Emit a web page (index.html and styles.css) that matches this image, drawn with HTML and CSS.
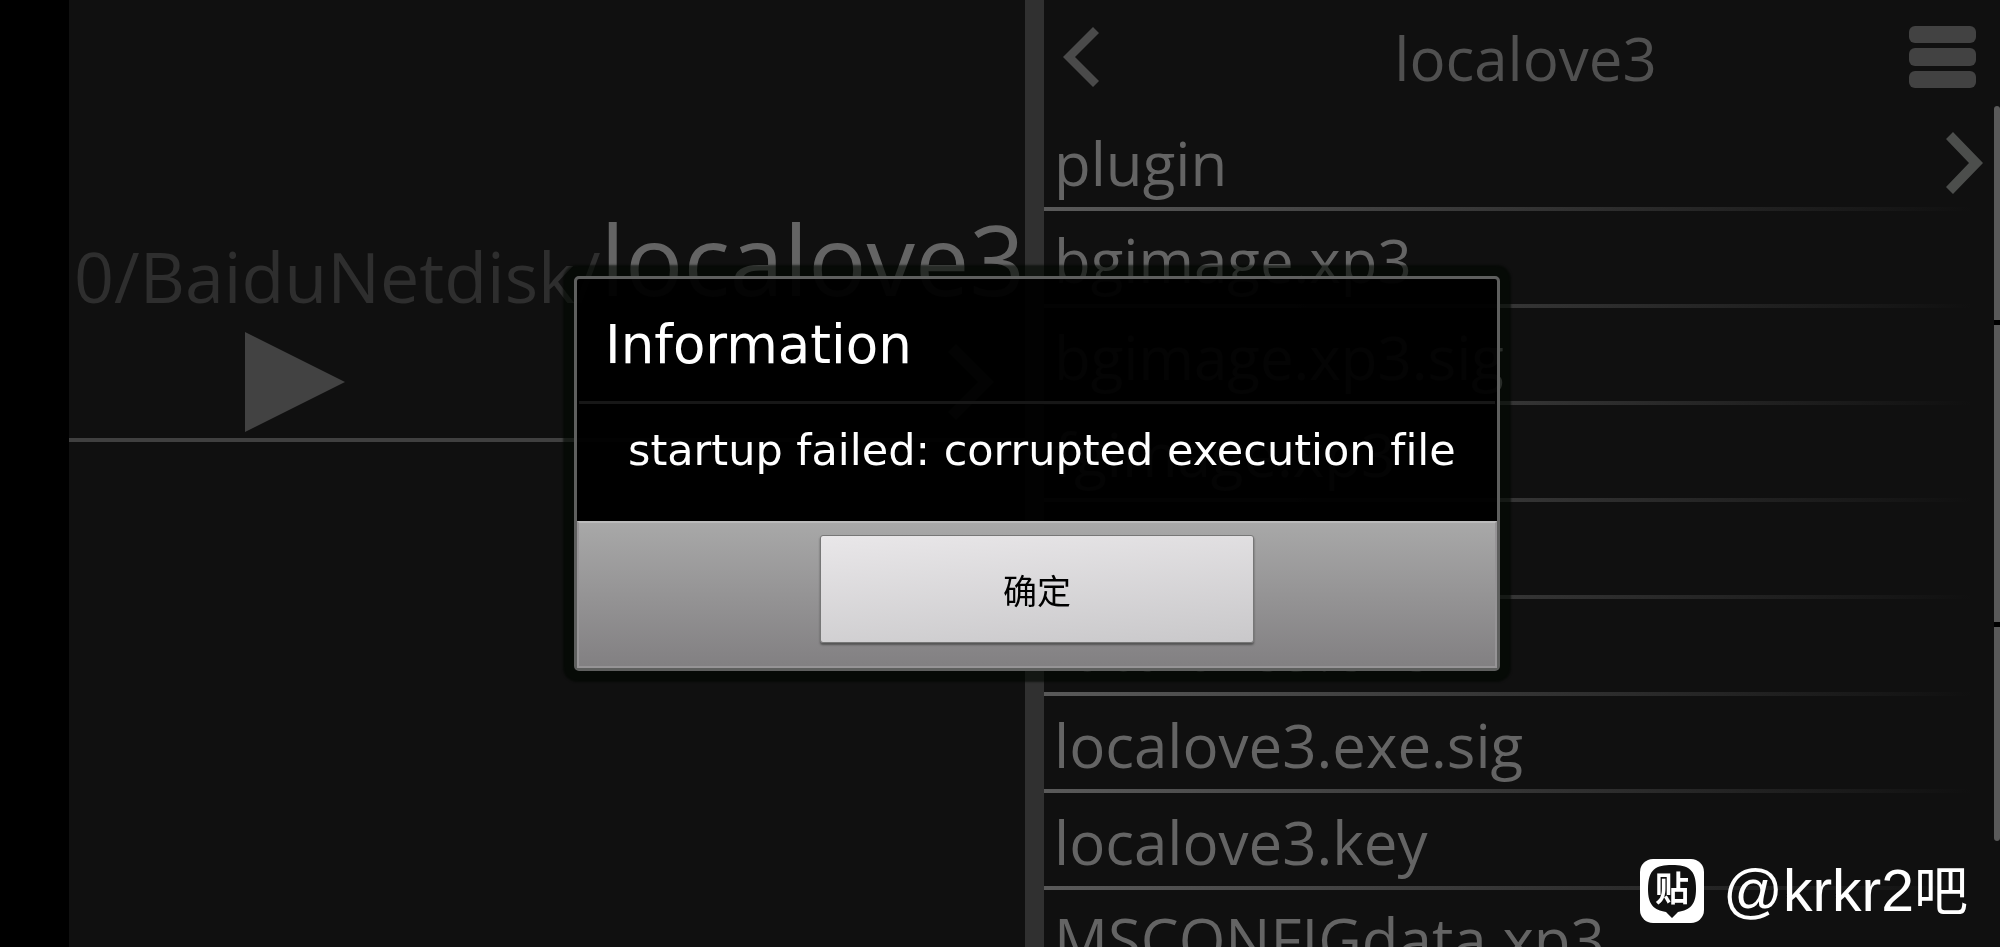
FILE: index.html
```html
<!DOCTYPE html>
<html lang="zh-CN">
<head>
    <meta charset="UTF-8">
    <meta name="viewport" content="width=device-width, initial-scale=1.0">
    <title>localove3</title>
    <link rel="stylesheet" href="styles.css">
</head>
<body>
    <div class="notch"></div>

    <section class="recent">
        <div class="recent-path">
            <span class="folder">0/BaiduNetdisk/</span>
            <span class="game">localove3</span>
        </div>
        <div class="recent-actions">
            <button class="icon-btn" aria-label="Play">
                <svg width="100" height="100" viewBox="0 0 100 100"><path d="M0 0L100 50L0 100Z" fill="#424242"/></svg>
            </button>
            <button class="icon-btn" aria-label="Open">
                <svg width="46" height="76" viewBox="0 0 46 76"><path d="M8 0L46 38L8 76L0 68L30 38L0 8Z" fill="#4c4e4c"/></svg>
            </button>
        </div>
    </section>

    <main class="browser">
        <header class="topbar">
            <button class="icon-btn" aria-label="Back">
                <svg width="36" height="60" viewBox="0 0 36 60"><path d="M30 0L36 6L12 30L36 54L30 60L0 30Z" fill="#4a4a4a"/></svg>
            </button>
            <h1>localove3</h1>
            <button class="icon-btn menu-btn" aria-label="Menu">
                <svg width="67" height="62" viewBox="0 0 67 62" fill="#424242">
                    <rect y="0" width="67" height="17" rx="6"/>
                    <rect y="22" width="67" height="18" rx="6"/>
                    <rect y="45" width="67" height="17" rx="6"/>
                </svg>
            </button>
        </header>
        <ul class="files">
            <li>plugin
                <button class="icon-btn" aria-label="Open plugin">
                    <svg width="37" height="62" viewBox="0 0 37 62"><path d="M7 0L37 31L7 62L0 55L23 31L0 7Z" fill="#4c4e4c"/></svg>
                </button>
            </li>
            <li>bgimage.xp3</li>
            <li>bgimage.xp3.sig</li>
            <li>fgimage.xp3</li>
            <li>fgimage.xp3.sig</li>
            <li>localove3.exe</li>
            <li>localove3.exe.sig</li>
            <li>localove3.key</li>
            <li>MSCONFIGdata.xp3</li>
        </ul>
        <div class="scrollbar"><i></i><i></i><i></i></div>
    </main>

    <div class="overlay">
        <div class="dialog" role="alertdialog" aria-labelledby="dlg-title" aria-describedby="dlg-text">
            <h2 id="dlg-title">Information</h2>
            <p id="dlg-text">startup failed: corrupted execution file</p>
            <div class="dialog-footer">
                <button class="ok-btn">确定</button>
            </div>
        </div>
    </div>

    <div class="watermark">
        <svg width="64" height="64" viewBox="0 0 64 64">
            <rect width="64" height="64" rx="13" fill="#fff"/>
            <path d="M32 6C48 6 56 10 56 30C56 46 50 51 38 53L32 59L26 53C14 51 8 46 8 30C8 10 16 6 32 6Z" fill="#101010"/>
            <text class="logo-text" x="32" y="42" text-anchor="middle">贴</text>
        </svg>
        <span>@krkr2<span class="ba">吧</span></span>
    </div>
</body>
</html>
```

FILE: styles.css
```css
* { box-sizing: border-box; }
body { display: flex; height: 100vh; margin: 0; overflow: hidden; background: #101010; color: #646464; font-family: "Open Sans", "Noto Sans CJK SC", sans-serif; }
h1, h2, p, ul { margin: 0; padding: 0; font-weight: normal; }
svg { display: block; }
.icon-btn { padding: 0; border: 0; background: none; cursor: pointer; }

.notch { flex: 0 0 69px; background: #000; }

/* left side: last played game */
.recent { flex: 1; min-width: 0; padding-top: 192px; overflow: hidden; }
.recent-path { display: flex; justify-content: flex-end; align-items: flex-end; height: 132px; white-space: nowrap; }
.folder { font-size: 70px; color: #2e2e2e; }
.game { font-size: 97px; }
.recent-actions { display: flex; justify-content: space-between; align-items: center; height: 118px; padding: 2px 31px 0 176px; border-bottom: 4px solid #404040; }

/* right side: file list */
.browser { position: relative; flex: 1; min-width: 0; border-left: 19px solid #303030; flex-basis: 19px; }
.topbar { display: grid; grid-template-columns: 85px 1fr 73px; align-items: center; height: 114px; padding: 0 24px 0 19px; }
.topbar h1 { padding-top: 2px; font-size: 60px; line-height: 82px; color: #505050; text-align: center; }
.menu-btn { justify-self: end; }
.files { list-style: none; }
.files li { display: flex; justify-content: space-between; align-items: center; height: 97px; padding: 4px 17px 0 10px; border-bottom: 4px solid; border-image: linear-gradient(to right, #5a5a5a, #101010 97%) 1; border-width: 0 0 4px; font-size: 60px; line-height: 82px; }
.scrollbar { position: absolute; top: 106px; right: 0; width: 6px; height: 735px; display: flex; flex-direction: column; gap: 5px; border-radius: 3px; overflow: hidden; background: #000; }
.scrollbar i { flex: 214; background: #5a5a5a; }
.scrollbar i:nth-child(2) { flex: 297; }

/* message box */
.overlay { position: fixed; inset: 0; display: flex; align-items: center; justify-content: center; padding-left: 74px; }
.dialog { width: 926px; border: 3px solid #5e5f5e; border-radius: 5px; background: rgba(0, 0, 0, 0.96); background-clip: padding-box; box-shadow: 0 0 2px 11px rgba(0, 6, 0, 0.6); color: #fff; font-family: "DejaVu Sans", sans-serif; font-variant-ligatures: none; }
.dialog h2 { margin: 0 2px; padding: 37px 26px 27px; border-bottom: 3px solid #171717; font-size: 53px; line-height: 58px; }
.dialog p { padding: 20px 48px 45px 51px; font-size: 43px; line-height: 52px; white-space: nowrap; }
.dialog-footer { display: flex; justify-content: center; height: 147px; padding: 12px 0 23px; border: 2px solid #969496; border-top-color: #bbb; background: linear-gradient(#a8a8a8, #828082); }
.ok-btn { width: 434px; padding: 0; border: 1px solid #777; border-radius: 3px; background: linear-gradient(175deg, #e9e7e9, #c9c8ca); box-shadow: 0 2px 2px #555; color: #000; font-family: "Noto Sans CJK SC", sans-serif; font-size: 34px; cursor: pointer; }

.watermark { position: fixed; right: 32px; bottom: 16px; display: flex; align-items: center; gap: 19px; color: #fff; font-family: "Liberation Sans", "Noto Sans CJK SC", sans-serif; font-size: 59px; line-height: 80px; }
.ba { font-size: 54px; line-height: 1; }
.logo-text { fill: #fff; font-family: "Noto Sans CJK SC", sans-serif; font-size: 34px; font-weight: bold; }
```
